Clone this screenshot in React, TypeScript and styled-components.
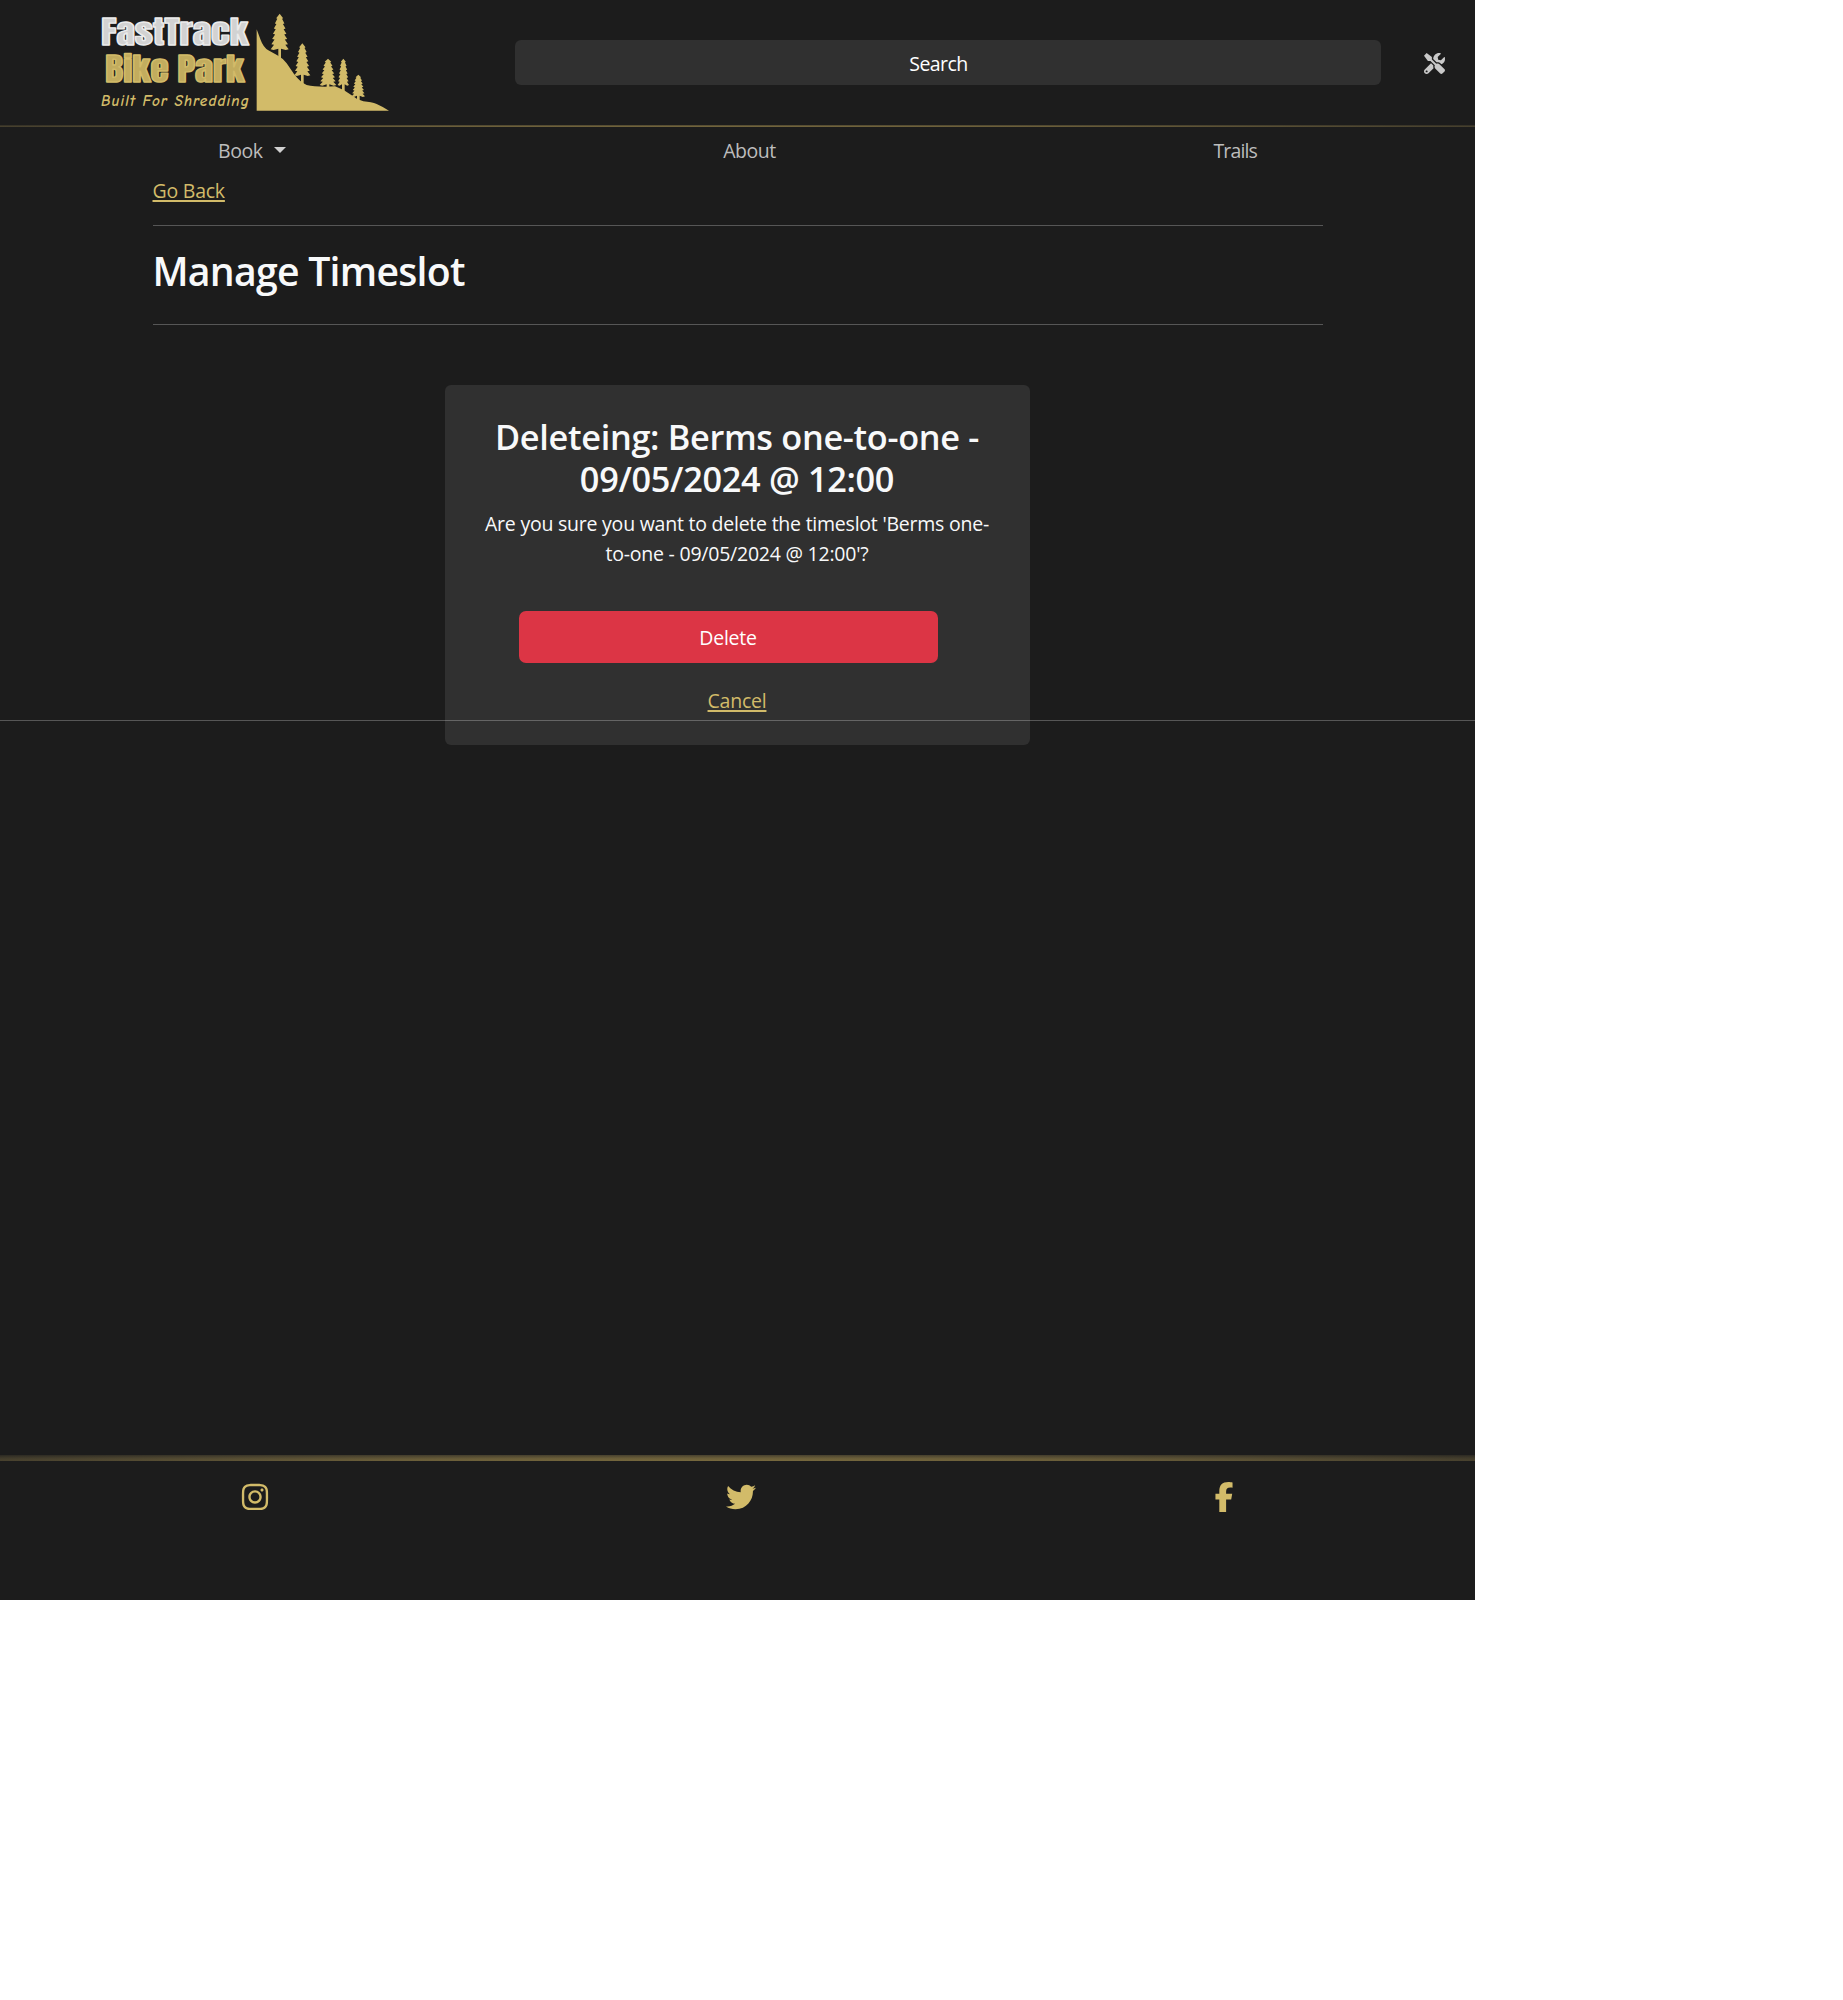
import React from "react";
import styled, { createGlobalStyle } from "styled-components";
import { FaTools } from "react-icons/fa";
import { FaFacebookF, FaInstagram, FaTwitter } from "react-icons/fa6";

const gold = "#d2bb69";
const dark = "#1c1c1c";
const panel = "#303030";

const GlobalStyle = createGlobalStyle`
  *, *::before, *::after { box-sizing: border-box; }
  body {
    margin: 0;
    background: #fff;
    color: #f8f9fa;
    font: 400 19.5px/30px "Open Sans", "Noto Sans", sans-serif;
    letter-spacing: -0.23px;
  }
  h1, h2, p { margin: 0; }
`;

const Page = styled.div`
  display: flex;
  flex-direction: column;
  width: 1475px;
  height: 1600px;
  background: ${dark};
`;

const Header = styled.header`
  display: flex;
  align-items: center;
  height: 125px;
  padding: 0 30px 0 101px;
`;

const Logo = styled.svg`
  flex: none;
  width: 290px;
  height: 100px;
  margin-bottom: 1px;
  overflow: visible;
`;

const SearchButton = styled.button`
  width: 866px;
  height: 45px;
  margin-left: 124px;
  padding: 2px 19px 0 0;
  border: 0;
  border-radius: 6px;
  background: ${panel};
  color: #fff;
  font: inherit;
  font-weight: 500;
  letter-spacing: -0.55px;
`;

const ToolsLink = styled.a`
  display: flex;
  margin: 2px 0 0 auto;
  color: #c9c9c9;
  font-size: 21px;
`;

const GlowLine = styled.div<{ $height: number }>`
  flex: none;
  height: ${(p) => p.$height}px;
  background: radial-gradient(ellipse at bottom, #786a3e 0%, #695d39 35%, #4a432f 68%, #2a2822 100%);
`;

const Nav = styled.nav`
  display: flex;
  justify-content: space-between;
  padding: 9px 218px 10px 218px;
`;

const NavItem = styled.a<{ $tight?: boolean }>`
  display: flex;
  align-items: center;
  color: #bdbdbd;
  letter-spacing: ${(p) => (p.$tight ? -0.85 : -0.45)}px;
`;

const Caret = styled.span`
  margin: -3px 0 0 11px;
  border: 6px solid transparent;
  border-top-color: #d0d0d0;
  border-bottom: 0;
`;

const Main = styled.main`
  padding: 0 152.5px;
`;

const GoldLink = styled.a`
  color: ${gold};
  text-decoration: underline 2px;
  text-underline-offset: 2px;
`;

const Rule = styled.hr<{ $top?: number }>`
  width: 100%;
  height: 1px;
  margin: ${(p) => p.$top ?? 20}px 0 0;
  border: 0;
  background: rgba(255, 255, 255, 0.26);
`;

const Title = styled.h1`
  padding: 21px 0 9px;
  font-size: 39.2px;
  font-weight: 600;
  line-height: 48px;
  letter-spacing: -0.75px;
`;

const Card = styled.section`
  width: 585px;
  height: 360px;
  margin: 60px 0 0 292px;
  padding: 31px 36px;
  border-radius: 6px;
  background: ${panel};
  text-align: center;
`;

const CardTitle = styled.h2`
  padding-bottom: 9px;
  font-size: 34.3px;
  font-weight: 600;
  line-height: 42px;
  letter-spacing: -0.32px;
`;

const DeleteButton = styled.button`
  display: block;
  width: 419px;
  height: 52px;
  margin: 42px 0 23px 38px;
  padding: 1px 0 0;
  border: 0;
  border-radius: 7px;
  background: #dc3545;
  color: #fff;
  font: inherit;
  letter-spacing: inherit;
`;

const Footer = styled.footer`
  margin-top: auto;
  height: 145px;
`;

const Socials = styled.div`
  display: flex;
  justify-content: space-between;
  padding: 21px 236px 0 239.5px;
  color: ${gold};
  font-size: 30px;
`;

const BirdIcon = styled(FaTwitter)`
  margin-left: 3px;
`;

const trees = [
  { x: 569, top: 41, base: 150, half: 27, root: 182 },
  { x: 637, top: 130, base: 228, half: 24, root: 252 },
  { x: 714, top: 176, base: 257, half: 25, root: 264 },
  { x: 760, top: 176, base: 257, half: 17, root: 276 },
  { x: 805, top: 224, base: 291, half: 20, root: 305 },
];

function treePath({ x, top, base, half, root }: (typeof trees)[number]) {
  const tiers = 7;
  const left: string[] = [];
  const right: string[] = [];
  for (let i = 1; i <= tiers; i++) {
    const y = top + ((base - top) * i) / tiers;
    const w = 3 + (half - 3) * Math.pow(i / tiers, 0.6);
    right.push(`L${x + w} ${y - 2} L${x + w * 0.68} ${y}`);
    left.unshift(`L${x - w * 0.68} ${y} L${x - w} ${y - 2}`);
  }
  return `M${x} ${top} ${right.join(" ")} L${x + 4} ${base - 4} V${root} H${x - 4} V${base - 4} ${left.join(" ")} Z`;
}

const Wordmark = styled.text<{ $core: string }>`
  font: 400 94px/1 Anton, Impact, "Roboto Condensed", sans-serif;
  letter-spacing: 0;
  fill: ${(p) => p.$core};
  stroke-width: 4px;
  stroke-linejoin: round;
`;

const Tagline = styled.text`
  font: italic 700 46px "Comic Neue", "Open Sans", sans-serif;
  letter-spacing: 0;
  fill: ${gold};
`;

function BrandLogo() {
  return (
    <Logo viewBox="33 36 870 300">
      <Wordmark $core="#d2d2d2" stroke="#ebebeb" x="34" y="136" textLength="441" lengthAdjust="spacingAndGlyphs">FastTrack</Wordmark>
      <Wordmark $core="#c2ac5e" stroke={gold} x="46" y="245" textLength="417" lengthAdjust="spacingAndGlyphs">Bike Park</Wordmark>
      <Tagline x="33" y="318" textLength="443">Built For Shredding</Tagline>
      <path
        fill={gold}
        d="M500 88 L512 120 Q520 142 535 151 L562 166 Q580 176 590 190 L612 222 Q632 248 650 255 Q680 262 735 259 Q762 268 785 286 Q800 299 820 304 Q845 306 860 312 Q880 321 897 332 H500Z"
      />
      {trees.map((t) => (
        <path key={t.x} fill={gold} d={treePath(t)} />
      ))}
    </Logo>
  );
}

export default function App() {
  return (
    <>
      <GlobalStyle />
      <Page>
        <Header>
          <BrandLogo />
          <SearchButton>Search</SearchButton>
          <ToolsLink><FaTools /></ToolsLink>
        </Header>
        <GlowLine $height={2} />
        <Nav>
          <NavItem>Book<Caret /></NavItem>
          <NavItem>About</NavItem>
          <NavItem $tight>Trails</NavItem>
        </Nav>
        <Main>
          <GoldLink>Go Back</GoldLink>
          <Rule $top={19} />
          <Title>Manage Timeslot</Title>
          <Rule />
          <Card>
            <CardTitle>Deleteing: Berms one-to-one - 09/05/2024 @ 12:00</CardTitle>
            <p>Are you sure you want to delete the timeslot 'Berms one-to-one - 09/05/2024 @ 12:00'?</p>
            <DeleteButton>Delete</DeleteButton>
            <GoldLink>Cancel</GoldLink>
          </Card>
        </Main>
        <Rule $top={-25} />
        <Footer>
          <GlowLine $height={6} />
          <Socials>
            <FaInstagram />
            <BirdIcon />
            <FaFacebookF />
          </Socials>
        </Footer>
      </Page>
    </>
  );
}
